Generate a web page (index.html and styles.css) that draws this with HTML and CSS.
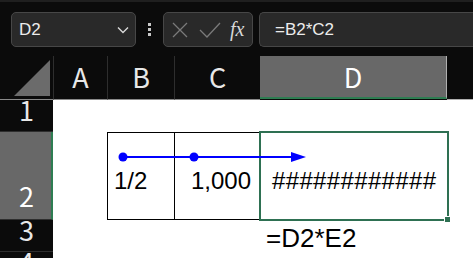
FILE: index.html
```html
<!DOCTYPE html>
<html lang="ja">
<head>
    <meta charset="UTF-8">
    <title>sheet</title>
    <link rel="stylesheet" href="styles.css">
</head>
<body>
<div class="bar">
    <div class="name-box">
        <span>D2</span>
        <svg class="chev" width="12" height="8" viewBox="0 0 12 8"><path d="M1 1.5 L6 6.5 L11 1.5" fill="none" stroke="#d8d8d8" stroke-width="1.4"/></svg>
    </div>
    <div class="dots"><i></i><i></i><i></i></div>
    <div class="fx-box">
        <svg width="18" height="18" viewBox="0 0 18 18"><path d="M2 2 L16 16 M16 2 L2 16" stroke="#7a7a7a" stroke-width="1.3"/></svg>
        <svg width="22" height="18" viewBox="0 0 22 18"><path d="M1 9 L8 16 L21 2" fill="none" stroke="#7a7a7a" stroke-width="1.3"/></svg>
        <span class="fx">fx</span>
    </div>
    <div class="formula">=B2*C2</div>
</div>

<div class="sheet">
    <div class="corner"><svg width="36" height="36" viewBox="0 0 36 36"><path d="M0 36 L36 0 L36 36 Z" fill="#6b6b6b"/></svg></div>
    <div class="col-head">A</div>
    <div class="col-head">B</div>
    <div class="col-head">C</div>
    <div class="col-head sel">D</div>
    <div class="col-head rest"></div>

    <div class="row-head">1</div>
    <div class="cells r1"></div>

    <div class="row-head sel">2</div>
    <div class="cells a2"></div>
    <div class="cell b2">1/2</div>
    <div class="cell c2">1,000</div>
    <div class="cell d2">############<span class="handle"></span></div>
    <div class="cells r2"></div>

    <div class="row-head">3</div>
    <div class="cells r3a"></div>
    <div class="cell d3">=D2*E2</div>
    <div class="cells r3b"></div>

    <div class="row-head">4</div>
    <div class="cells r4"></div>

    <svg class="trace" width="473" height="202" viewBox="0 56 473 202">
        <line x1="123" y1="157" x2="293" y2="157" stroke="#0000ff" stroke-width="2"/>
        <circle cx="123" cy="157" r="4.5" fill="#0000ff"/>
        <circle cx="194" cy="157" r="4.5" fill="#0000ff"/>
        <path d="M291 152 L306 157 L291 162 Z" fill="#0000ff"/>
    </svg>
</div>
</body>
</html>
```

FILE: styles.css
```css
html, body {
    margin: 0;
    padding: 0;
}

body {
    width: 473px;
    height: 258px;
    overflow: hidden;
    background: #0b0b0b;
    font-family: "Noto Sans CJK JP", "Noto Sans", sans-serif;
}

.bar {
    height: 56px;
    border-top: 2px solid #1f1f1f;
    display: flex;
    align-items: flex-start;
    padding: 10px 0 0 11px;
    box-sizing: border-box;
}

.name-box, .fx-box, .formula {
    height: 35px;
    box-sizing: border-box;
    background: #292929;
    border: 1px solid #474747;
    border-radius: 5px;
    color: #ececec;
    display: flex;
    align-items: center;
}

.name-box {
    width: 125px;
    padding: 0 6px 0 7px;
    justify-content: space-between;
    font-family: "Liberation Sans", sans-serif;
    font-size: 17px;
}

.dots {
    width: 27px;
    height: 35px;
    display: flex;
    flex-direction: column;
    align-items: center;
    justify-content: center;
    gap: 2px;
}

.dots i {
    width: 3px;
    height: 3px;
    background: #c8c8c8;
}

.fx-box {
    width: 90px;
    padding: 0 4px 0 7px;
    gap: 10px;
}

.fx {
    font-family: "Liberation Serif", serif;
    font-style: italic;
    font-size: 20px;
    color: #d8d8d8;
    margin-left: -1px;
}

.formula {
    margin-left: 6px;
    flex: 1;
    border-right: none;
    border-radius: 5px 0 0 5px;
    padding-left: 15px;
    font-family: "Liberation Sans", sans-serif;
    font-size: 17px;
}

.sheet {
    position: relative;
    display: grid;
    grid-template-columns: 53px 54px 67px 86px 187px 1fr;
    grid-template-rows: 44px 32px 88px 32px 32px;
}

.corner {
    background: #0b0b0b;
    border-bottom: 1px solid #8a8a8a;
    display: flex;
    align-items: flex-start;
    padding: 4px 0 0 14px;
}

.col-head {
    display: flex;
    align-items: center;
    justify-content: center;
    color: #e8e8e8;
    font-size: 27px;
    line-height: 1;
    border-left: 1px solid #2e2e2e;
    border-bottom: 1px solid #8a8a8a;
    padding-bottom: 2px;
}

.col-head.sel {
    background: #686868;
    border-left: none;
    border-right: 1px solid #b0b0b0;
    border-bottom: 2px solid #2e7d52;
    color: #ffffff;
    margin-bottom: 1px;
    padding-bottom: 1px;
}

.col-head.rest {
    border-left: none;
    border-bottom-color: #b0b0b0;
}

.row-head {
    grid-column: 1;
    display: flex;
    justify-content: center;
    align-items: flex-end;
    color: #e8e8e8;
    font-size: 27px;
    line-height: 28px;
    padding-bottom: 7px;
    box-sizing: border-box;
    border-bottom: 1px solid #2e2e2e;
}

.row-head.sel {
    background: #686868;
    border-right: 2px solid #2e7d52;
    padding-left: 2px;
    padding-bottom: 9px;
    color: #ffffff;
}

.cells {
    background: #ffffff;
}

.r1, .r4 {
    grid-column: 2 / 7;
}

.a2 {
    grid-column: 2;
}

.r2 {
    grid-column: 6;
}

.r3a {
    grid-column: 2 / 5;
}

.r3b {
    grid-column: 6;
}

.cell {
    background: #ffffff;
    font-family: "Liberation Sans", Arial, sans-serif;
    font-size: 24px;
    color: #000000;
    display: flex;
    align-items: center;
    box-sizing: border-box;
}

.b2 {
    grid-column: 3;
    border: 1px solid #000000;
    border-right: none;
    padding: 10px 0 0 6px;
}

.c2 {
    border: 1px solid #000000;
    padding: 10px 0 0 16px;
}

.d2 {
    position: relative;
    margin: -1px -2px -1px -1px;
    border: 2px solid #2e7052;
    padding: 10px 0 0 11px;
    letter-spacing: 0.35px;
}

.handle {
    position: absolute;
    right: -4px;
    bottom: -4px;
    width: 5px;
    height: 5px;
    background: #2e7052;
    border: 1px solid #ffffff;
}

.d3 {
    grid-column: 5;
    align-items: flex-start;
    padding: 5px 0 0 6px;
    font-size: 26px;
    line-height: 1;
}

.trace {
    position: absolute;
    left: 0;
    top: 0;
    pointer-events: none;
}
```
